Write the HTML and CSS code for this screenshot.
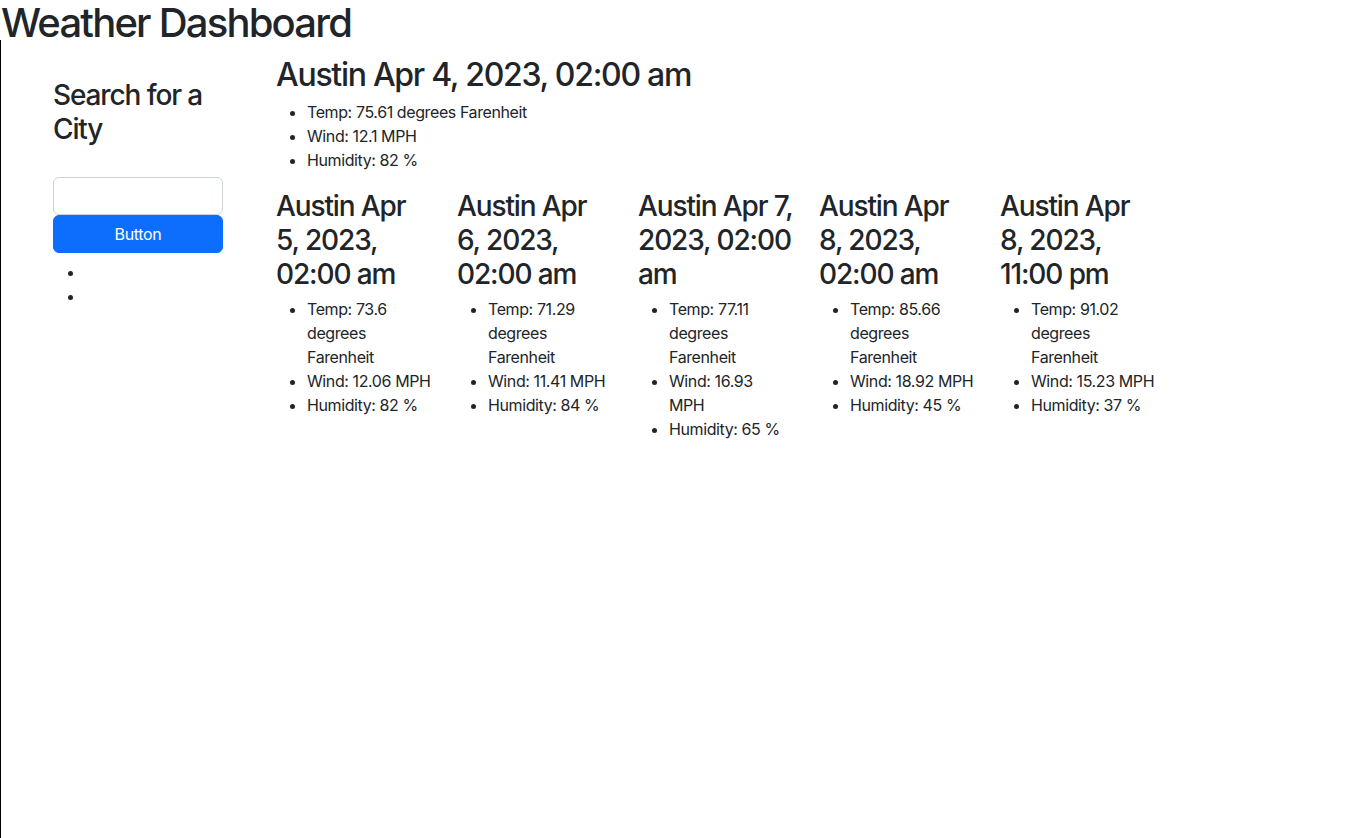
FILE: index.html
```html
<!DOCTYPE html>
<html lang="en">
<head>
<meta charset="utf-8">
<title>Weather Dashboard</title>
<link rel="stylesheet" href="styles.css">
</head>
<body>
<h1 class="title">Weather Dashboard</h1>
<div class="layout">
  <aside class="sidebar">
    <h3 class="side-heading">Search for a City</h3>
    <input class="search-input" type="text">
    <button class="search-btn" type="button">Button</button>
    <ul class="history">
      <li></li>
      <li></li>
    </ul>
  </aside>
  <main class="content">
    <section class="today">
      <h2 class="today-heading">Austin Apr 4, 2023, 02:00 am</h2>
      <ul class="stats today-stats">
        <li>Temp: 75.61 degrees Farenheit</li>
        <li>Wind: 12.1 MPH</li>
        <li>Humidity: 82 %</li>
      </ul>
    </section>
    <section class="forecast">
      <div class="card">
        <h3 class="card-heading">Austin Apr 5, 2023, 02:00 am</h3>
        <ul class="stats">
          <li>Temp: 73.6 degrees Farenheit</li>
          <li>Wind: 12.06 MPH</li>
          <li>Humidity: 82 %</li>
        </ul>
      </div>
      <div class="card">
        <h3 class="card-heading">Austin Apr 6, 2023, 02:00 am</h3>
        <ul class="stats">
          <li>Temp: 71.29 degrees Farenheit</li>
          <li>Wind: 11.41 MPH</li>
          <li>Humidity: 84 %</li>
        </ul>
      </div>
      <div class="card">
        <h3 class="card-heading">Austin Apr 7, 2023, 02:00 am</h3>
        <ul class="stats stats-narrow">
          <li>Temp: 77.11 degrees Farenheit</li>
          <li>Wind: 16.93 MPH</li>
          <li>Humidity: 65 %</li>
        </ul>
      </div>
      <div class="card">
        <h3 class="card-heading">Austin Apr 8, 2023, 02:00 am</h3>
        <ul class="stats">
          <li>Temp: 85.66 degrees Farenheit</li>
          <li>Wind: 18.92 MPH</li>
          <li>Humidity: 45 %</li>
        </ul>
      </div>
      <div class="card">
        <h3 class="card-heading">Austin Apr 8, 2023, 11:00 pm</h3>
        <ul class="stats">
          <li>Temp: 91.02 degrees Farenheit</li>
          <li>Wind: 15.23 MPH</li>
          <li>Humidity: 37 %</li>
        </ul>
      </div>
    </section>
  </main>
</div>
</body>
</html>
```
FILE: styles.css
```css
* { box-sizing: border-box; }

html, body {
  margin: 0;
  padding: 0;
}

body {
  font-family: Inter, "Noto Sans", "Liberation Sans", sans-serif;
  font-size: 16px;
  line-height: 24px;
  color: #212529;
  background: #fff;
}

h1, h2, h3 {
  font-weight: 500;
  margin: 0;
}

.title {
  font-size: 40px;
  line-height: 46px;
  margin-bottom: -6px;
  letter-spacing: -0.045em;
  padding-left: 1px;
}

.layout {
  display: flex;
  align-items: flex-start;
  border-left: 1px solid #000;
  height: calc(100vh - 40px);
}

.sidebar {
  width: 170px;
  margin-left: 52px;
  padding-top: 38px;
}

.side-heading {
  font-size: 28px;
  line-height: 34px;
  letter-spacing: -0.04em;
  margin-bottom: 31px;
}

.search-input {
  display: block;
  width: 170px;
  height: 38px;
  border: 1px solid #ced4da;
  border-radius: 6px;
  margin: 0;
  padding: 6px 12px;
  font: inherit;
  background: #fff;
}

.search-btn {
  display: block;
  width: 170px;
  height: 38px;
  margin: 0;
  border: 1px solid #0d6efd;
  border-radius: 6px;
  background: #0d6efd;
  color: #fff;
  font: inherit;
  letter-spacing: -0.02em;
  cursor: pointer;
}

.history {
  margin: 7px 0 0;
  padding-left: 32px;
}

.history li {
  height: 24px;
}

.content {
  margin-left: 53px;
  padding-top: 16px;
}

.today-heading {
  font-size: 32px;
  line-height: 38px;
  letter-spacing: -0.04em;
  margin-bottom: 6px;
}

.stats {
  margin: 0 0 16px;
  padding-left: 31px;
  letter-spacing: -0.025em;
}

.today-stats {
  margin-bottom: 17px;
}

.stats-narrow {
  padding-right: 4px;
}

.forecast {
  display: flex;
  gap: 25px;
}

.card {
  width: 156px;
  flex: none;
}

.card-heading {
  font-size: 28px;
  line-height: 34px;
  letter-spacing: -0.04em;
  margin-bottom: 6px;
}
```
